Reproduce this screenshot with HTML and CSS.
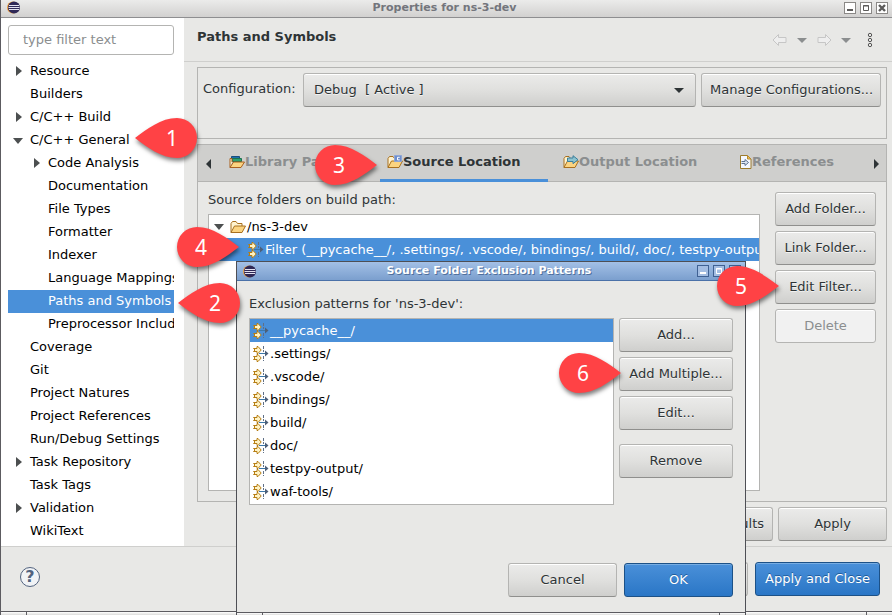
FILE: index.html
```html
<!DOCTYPE html>
<html lang="en">
<head>
    <meta charset="UTF-8">
    <meta name="viewport" content="width=device-width, initial-scale=1.0">
    <title>Properties for ns-3-dev</title>
    <link rel="stylesheet" href="styles.css">
</head>
<body>
    <!-- shared icons -->
    <svg class="defs" width="0" height="0" aria-hidden="true">
        <symbol id="eclipse" viewBox="0 0 13 13">
            <circle cx="6" cy="6.500" r="6" fill="#e8993c"/>
            <circle cx="7" cy="6.500" r="6" fill="#2f2856"/>
            <path d="M2 4.500h10M1.500 6.500h11M2 8.500h10" stroke="#e4e2f0" stroke-width="1.100"/>
        </symbol>
        <symbol id="filter" viewBox="0 0 16 16">
            <path d="M.500 2.500H4V.500h1L8.200 4 5 7.500H4v-2H.500L2 4z" class="gold"/>
            <path d="M.500 10.500H4v-2h1L8.200 12 5 15.500H4v-2H.500L2 12z" class="gold"/>
            <path d="M10.500 0v6M10.500 10v5" class="bar" stroke="#5f6f86" stroke-dasharray="3 1"/>
            <path d="M6 7.500h7" class="line" stroke="#3d78a8"/>
            <path d="M12 4.500l3.500 3-3.500 3z" class="head" fill="#4d5f78"/>
        </symbol>
        <symbol id="folder" viewBox="0 0 16 14">
            <path d="M1 12.500V3.500l1.500-2H6l1.500 2H12V6" fill="#fff3cf" stroke="#a8701f"/>
            <path d="M1 12.500L4.500 6h11L12 12.500z" fill="#fbd481" stroke="#a8701f" stroke-linejoin="round"/>
        </symbol>
        <symbol id="library" viewBox="0 0 16 14">
            <path d="M2.500 1.500h8v2h-8z" fill="#1e6fae" stroke="#184f7f"/>
            <path d="M3.500 3.500h9v3h-9z" fill="#2fa06f" stroke="#1c7350"/>
            <path d="M1 12.500V3.500h2V7" fill="#fff3cf" stroke="#a8601f"/>
            <path d="M1 12.500L4.500 7h11L12 12.500z" fill="#fbd481" stroke="#a8601f" stroke-linejoin="round"/>
        </symbol>
        <symbol id="source" viewBox="0 0 16 14">
            <use href="#folder" width="16" height="14"/>
            <path d="M7.500.500h7v6h-7z" fill="#6f8fce" stroke="#8ea6d6"/>
            <path d="M12.700 2.300h-2.200v2.600h2.200" fill="none" stroke="#fff"/>
        </symbol>
        <symbol id="output" viewBox="0 0 16 14">
            <use href="#folder" width="16" height="14"/>
            <path d="M4.500 3H10V.700l5 4-5 4V6.500H4.500z" fill="#8cc3cf" stroke="#3a7f9c"/>
        </symbol>
        <symbol id="references" viewBox="0 0 12 14">
            <path d="M.500.500h7l3.500 3.500v9.500H.500z" fill="#f4f8ff" stroke="#9c7b2c"/>
            <path d="M7.500.500V4H11z" fill="#f0c65a" stroke="#b98a2a"/>
            <path d="M1.500 6.500H5V4.500L8.500 7.500 5 10.500v-2H1.500" fill="#dfe8f3" stroke="#5e7391"/>
        </symbol>
        <symbol id="back" viewBox="0 0 16 14">
            <path d="M1 7l5.500-5.500V4.500H14v5H6.500v3z" fill="#eee" stroke="#c6c6c6"/>
        </symbol>
        <symbol id="pin-left" viewBox="0 0 62 40">
            <path d="M0 20C12 11 26 0 42 0a20 20 0 0 1 0 40C26 40 12 29 0 20z" fill="#ff4245"/>
        </symbol>
        <symbol id="pin-right" viewBox="0 0 62 40">
            <path d="M62 20C50 11 36 0 20 0a20 20 0 0 0 0 40C36 40 50 29 62 20z" fill="#ff4245"/>
        </symbol>
        <symbol id="minimize" viewBox="0 0 12 12"><path d="M3 8h6" stroke="currentColor" stroke-width="2"/></symbol>
        <symbol id="maximize" viewBox="0 0 12 12"><path d="M3.500 3.500h5v5h-5zM3 4h6" fill="none" stroke="currentColor"/></symbol>
        <symbol id="close" viewBox="0 0 12 12"><path d="M3 3l6 6M9 3L3 9" stroke="currentColor" stroke-width="2.400"/></symbol>
    </svg>

    <div class="window">
        <header class="titlebar">
            <svg class="app-icon"><use href="#eclipse"/></svg>
            <h1>Properties for ns-3-dev</h1>
            <div class="controls">
                <button aria-label="Minimize"><svg><use href="#minimize"/></svg></button>
                <button aria-label="Maximize"><svg><use href="#maximize"/></svg></button>
                <button aria-label="Close"><svg><use href="#close"/></svg></button>
            </div>
        </header>

        <div class="main">
            <nav class="sidebar">
                <input type="text" class="search" placeholder="type filter text" aria-label="Filter">
                <ul class="tree">
                    <li class="closed">Resource</li>
                    <li>Builders</li>
                    <li class="closed">C/C++ Build</li>
                    <li class="open">C/C++ General</li>
                    <li class="child closed">Code Analysis</li>
                    <li class="child">Documentation</li>
                    <li class="child">File Types</li>
                    <li class="child">Formatter</li>
                    <li class="child">Indexer</li>
                    <li class="child">Language Mappings</li>
                    <li class="child selected">Paths and Symbols</li>
                    <li class="child">Preprocessor Include</li>
                    <li>Coverage</li>
                    <li>Git</li>
                    <li>Project Natures</li>
                    <li>Project References</li>
                    <li>Run/Debug Settings</li>
                    <li class="closed">Task Repository</li>
                    <li>Task Tags</li>
                    <li class="closed">Validation</li>
                    <li>WikiText</li>
                </ul>
            </nav>

            <section class="page">
                <div class="page-header">
                    <h2>Paths and Symbols</h2>
                    <div class="history">
                        <button aria-label="Back"><svg width="16" height="14"><use href="#back"/></svg></button>
                        <button aria-label="Back history"><span class="caret"></span></button>
                        <button aria-label="Forward"><svg class="forward" width="16" height="14"><use href="#back"/></svg></button>
                        <button aria-label="Forward history"><span class="caret"></span></button>
                        <button class="menu" aria-label="Menu"><svg width="6" height="16" fill="none" stroke="#555"><circle cx="3" cy="3" r="1.700"/><circle cx="3" cy="8" r="1.700"/><circle cx="3" cy="13" r="1.700"/></svg></button>
                    </div>
                </div>

                <div class="page-body">
                    <div class="config">
                        <label for="config">Configuration:</label>
                        <div class="select-wrap">
                            <select id="config" class="btn">
                                <option>Debug&nbsp; [ Active ]</option>
                            </select>
                            <span class="caret dark"></span>
                        </div>
                        <button class="btn manage">Manage Configurations...</button>
                    </div>

                    <div class="panel">
                        <div class="tabs">
                            <button class="scroll prev" aria-label="Previous tabs"></button>
                            <button class="tab"><svg width="16" height="14"><use href="#library"/></svg>Library Paths</button>
                            <button class="tab active"><svg width="16" height="14"><use href="#source"/></svg>Source Location</button>
                            <button class="tab"><svg width="16" height="14"><use href="#output"/></svg>Output Location</button>
                            <button class="tab"><svg width="12" height="14"><use href="#references"/></svg>References</button>
                            <button class="scroll next" aria-label="Next tabs"></button>
                        </div>
                        <div class="panel-body">
                            <div class="sources">
                                <div class="caption">Source folders on build path:</div>
                                <ul class="list">
                                    <li class="root"><svg width="16" height="14"><use href="#folder"/></svg>/ns-3-dev</li>
                                    <li class="entry selected"><svg width="16" height="16"><use href="#filter"/></svg>Filter (__pycache__/, .settings/, .vscode/, bindings/, build/, doc/, testpy-output/, waf-tools/)</li>
                                </ul>
                            </div>
                            <div class="actions">
                                <button class="btn">Add Folder...</button>
                                <button class="btn">Link Folder...</button>
                                <button class="btn">Edit Filter...</button>
                                <button class="btn" disabled>Delete</button>
                            </div>
                        </div>
                    </div>

                    <div class="apply-row">
                        <button class="btn">Restore Defaults</button>
                        <button class="btn">Apply</button>
                    </div>
                </div>
            </section>
        </div>

        <footer class="footer">
            <button class="help" aria-label="Help">?</button>
            <div class="footer-buttons">
                <button class="btn">Cancel</button>
                <button class="btn primary">Apply and Close</button>
            </div>
        </footer>
        <div class="grip"></div>
    </div>

    <div class="dialog" role="dialog" aria-labelledby="dialog-title">
        <header class="titlebar">
            <svg class="app-icon"><use href="#eclipse"/></svg>
            <h1 id="dialog-title">Source Folder Exclusion Patterns</h1>
            <div class="controls">
                <button aria-label="Minimize"><svg><use href="#minimize"/></svg></button>
                <button aria-label="Maximize"><svg><use href="#maximize"/></svg></button>
                <button aria-label="Close"><svg><use href="#close"/></svg></button>
            </div>
        </header>
        <div class="dialog-body">
            <div class="caption">Exclusion patterns for 'ns-3-dev':</div>
            <div class="patterns">
                <ul class="list">
                    <li class="selected"><svg width="16" height="16"><use href="#filter"/></svg>__pycache__/</li>
                    <li><svg width="16" height="16"><use href="#filter"/></svg>.settings/</li>
                    <li><svg width="16" height="16"><use href="#filter"/></svg>.vscode/</li>
                    <li><svg width="16" height="16"><use href="#filter"/></svg>bindings/</li>
                    <li><svg width="16" height="16"><use href="#filter"/></svg>build/</li>
                    <li><svg width="16" height="16"><use href="#filter"/></svg>doc/</li>
                    <li><svg width="16" height="16"><use href="#filter"/></svg>testpy-output/</li>
                    <li><svg width="16" height="16"><use href="#filter"/></svg>waf-tools/</li>
                </ul>
                <div class="actions">
                    <button class="btn">Add...</button>
                    <button class="btn">Add Multiple...</button>
                    <button class="btn">Edit...</button>
                    <button class="btn remove">Remove</button>
                </div>
            </div>
            <div class="dialog-buttons">
                <button class="btn">Cancel</button>
                <button class="btn primary">OK</button>
            </div>
        </div>
        <div class="grip"></div>
    </div>

    <!-- numbered steps -->
    <div class="pin left pin-1"><svg><use href="#pin-left"/></svg><span>1</span></div>
    <div class="pin left pin-2"><svg><use href="#pin-left"/></svg><span>2</span></div>
    <div class="pin right pin-3"><svg><use href="#pin-right"/></svg><span>3</span></div>
    <div class="pin right pin-4"><svg><use href="#pin-right"/></svg><span>4</span></div>
    <div class="pin right pin-5"><svg><use href="#pin-right"/></svg><span>5</span></div>
    <div class="pin right pin-6"><svg><use href="#pin-right"/></svg><span>6</span></div>
</body>
</html>
```
FILE: styles.css
```css
* {
    box-sizing: border-box;
}
body {
    margin: 0;
    position: relative;
    background-color: #e8e8e6;
    color: #2e3436;
    font-family: "DejaVu Sans", sans-serif;
    font-size: 13px;
    line-height: 16px;
}
h1, h2, ul {
    margin: 0;
    padding: 0;
}
ul {
    list-style: none;
}
button {
    font: inherit;
    color: inherit;
    margin: 0;
    padding: 0;
    border: 0;
    background: none;
}
svg {
    flex: none;
}
.defs {
    position: absolute;
}
.gold {
    fill: #fff3c4;
    stroke: #b57c12;
}
.selected {
    --arrow: #3f5570;
}

/* window frame */
.window {
    display: flex;
    flex-direction: column;
    min-height: 100vh;
    border-left: 1px solid #5c5b60;
}
.titlebar {
    display: flex;
    align-items: center;
    flex: none;
    height: 18px;
    padding: 0 4px 2px 6px;
    border-bottom: 1px solid #8e8e90;
    background: linear-gradient(#ebebea, #d2d1d0);
    color: #73757c;
}
.titlebar h1 {
    flex: 1;
    padding-left: 25px;
    font-size: 11px;
    line-height: 14px;
    text-align: center;
}
.app-icon {
    width: 13px;
    height: 13px;
}
.controls {
    display: flex;
    gap: 4px;
}
.controls button {
    width: 12px;
    height: 12px;
    background-color: #fff;
    outline: 1px solid #8a8886;
    outline-offset: -1px;
    color: #5c5b5a;
}
.controls svg {
    display: block;
    width: 12px;
    height: 12px;
}
.grip {
    flex: none;
    height: 4px;
    border-top: 1px solid #5c5b60;
    background:
        linear-gradient(#5c5b60, #5c5b60) 25px 0 / 1px 100% no-repeat,
        linear-gradient(#5c5b60, #5c5b60) right 25px top 0 / 1px 100% no-repeat,
        linear-gradient(#fff, #dcdcda);
}
.main {
    display: flex;
    flex: 1;
}

/* category tree */
.sidebar {
    flex: none;
    width: 183px;
    padding: 7px 10px 0 7px;
    background-color: #fff;
}
.search {
    display: block;
    width: 100%;
    height: 30px;
    margin-bottom: 5px;
    padding: 0 14px 2px;
    border: 1px solid #b4b4b2;
    border-radius: 3px;
    font: inherit;
}
.search::placeholder {
    color: #8b8e8f;
}
.tree {
    overflow: hidden;
}
.tree li {
    position: relative;
    height: 23px;
    padding-left: 22px;
    line-height: 22px;
    color: #000;
    white-space: nowrap;
}
.tree .child {
    padding-left: 40px;
}
.tree .selected, .list .selected {
    background-color: #4a90d9;
    color: #fff;
}
.closed::before, .open::before, .root::before {
    content: "";
    position: absolute;
    left: 8px;
    top: 6px;
    border: 5px solid transparent;
    border-left: 6px solid #4c4f50;
    border-right: 0;
}
.child.closed::before {
    left: 26px;
}
.open::before, .root::before {
    left: 5px;
    top: 9px;
    border: 5px solid transparent;
    border-top: 6px solid #4c4f50;
    border-bottom: 0;
}

/* properties page */
.page {
    display: flex;
    flex-direction: column;
    flex: 1;
    min-width: 0;
}
.page-header {
    display: flex;
    justify-content: space-between;
    height: 44px;
    padding: 10px 19px 0 13px;
    border-bottom: 1px solid #cfcfcd;
}
.page-header h2 {
    font-size: 13px;
    line-height: 18px;
}
.history {
    display: flex;
    align-items: center;
    height: 24px;
    gap: 9px;
}
.history button, .history svg {
    display: block;
}
.history .menu {
    margin-left: 7px;
}
.forward {
    transform: scaleX(-1);
}
.caret {
    display: block;
    border: 5px solid transparent;
    border-top-color: #8b8e8f;
    border-bottom: 0;
}
.caret.dark {
    border-top-color: #2e3436;
}
.page-body {
    display: flex;
    flex-direction: column;
    flex: 1;
    gap: 5px;
    padding: 5px 5px 5px 13px;
}
.btn {
    height: 34px;
    padding: 0 8px 1px;
    border: 1px solid #b4b4b2;
    border-bottom-color: #8f8f8d;
    border-radius: 3px;
    background: linear-gradient(#ebebea, #e0e0de 50%, #cfcfcd);
    box-shadow: inset 0 1px #fff;
    color: #2e3436;
    font: inherit;
    text-shadow: 0 1px #f2f2f1;
    white-space: nowrap;
}
.btn:disabled {
    border-color: #b4b4b2;
    background: #f1f1f1;
    color: #8b8e8f;
}
.btn.primary {
    border-color: #1c5187;
    background: linear-gradient(#4a90d9, #2a76c6);
    box-shadow: inset 0 1px #77ade3;
    color: #fff;
    text-shadow: 0 -1px #1f5c9b;
}
.config {
    display: flex;
    align-items: flex-start;
    gap: 5px;
    height: 72px;
    padding: 5px;
    border: 1px solid #b4b4b2;
}
.config label {
    width: 95px;
    line-height: 32px;
}
.select-wrap {
    position: relative;
    flex: 1;
}
.select-wrap select {
    width: 100%;
    padding: 0 10px 1px;
    appearance: none;
}
.select-wrap .caret {
    position: absolute;
    right: 12px;
    top: 15px;
}
.manage {
    width: 180px;
}

/* tabs */
.panel {
    display: flex;
    flex-direction: column;
    flex: 1;
    border: 1px solid #b4b4b2;
}
.tabs {
    display: grid;
    grid-template-columns: 12px 150px 168px 169px 1fr 12px;
    column-gap: 8px;
    height: 37px;
    padding: 0 4px;
    border-bottom: 1px solid #b4b4b2;
    background-color: #cfcfcd;
}
.tab {
    display: flex;
    align-items: center;
    height: 37px;
    padding: 0 0 0 7px;
    border-bottom: 3px solid transparent;
    color: #8b8e8f;
    font-weight: bold;
    white-space: nowrap;
}
.tab.active {
    border-bottom-color: #4a90d9;
    color: #2e3436;
}
.scroll {
    justify-self: center;
    align-self: center;
    border: 5px solid transparent;
}
.scroll.prev {
    border-right-color: #2e3436;
    border-left: 0;
}
.scroll.next {
    border-left-color: #2e3436;
    border-right: 0;
}
.panel-body {
    display: flex;
    flex: 1;
    gap: 15px;
    padding: 10px;
}
.sources {
    display: flex;
    flex-direction: column;
    flex: 1;
    min-width: 0;
}
.caption {
    margin-bottom: 6px;
}
.list {
    flex: 1;
    overflow: hidden;
    padding-bottom: 1px;
    border: 1px solid #b4b4b2;
    background-color: #fff;
}
.list li {
    display: flex;
    position: relative;
    align-items: center;
    gap: 1px;
    height: 23px;
    padding-left: 3px;
    color: #000;
    line-height: 22px;
    white-space: nowrap;
}
.list .root {
    padding-left: 21px;
}
.list .entry {
    padding-left: 39px;
}
.actions {
    display: flex;
    flex-direction: column;
    gap: 5px;
    width: 101px;
}
.apply-row {
    display: flex;
    justify-content: flex-end;
    gap: 5px;
}
.apply-row .btn {
    min-width: 109px;
}

/* footer */
.footer {
    display: flex;
    justify-content: space-between;
    height: 65px;
    padding: 15px 12px 0 19px;
    border-top: 1px solid #cfcfcd;
}
.help {
    width: 20px;
    height: 20px;
    margin-top: 5px;
    border: 1px solid #52637f;
    border-radius: 50%;
    background-color: #f1f3f6;
    color: #52637f;
    font-size: 16px;
    font-weight: bold;
    line-height: 18px;
}
.footer-buttons {
    display: flex;
    gap: 7px;
}
.footer-buttons .btn {
    width: 125px;
}

/* exclusion patterns dialog */
.dialog {
    position: absolute;
    top: 261px;
    bottom: 0;
    left: 236px;
    display: flex;
    flex-direction: column;
    width: 510px;
    border: 1px solid #4e4f55;
    border-bottom: 0;
    background-color: #e8e8e6;
}
.dialog .titlebar {
    height: 19px;
    padding-bottom: 0;
    border-bottom-color: #4a71a8;
    background: linear-gradient(#a3c0e6, #7b9fce);
    color: #fff;
    text-shadow: 1px 1px #4f6f9c;
}
.dialog .controls button {
    background-color: #a3bde2;
    outline-color: #3f6193;
    color: #fff;
}
.dialog .grip {
    height: 3px;
}
.dialog-body {
    display: flex;
    flex-direction: column;
    flex: 1;
    padding: 15px 12px;
}
.patterns {
    display: flex;
    gap: 5px;
}
.patterns .actions {
    width: 114px;
}
.patterns .remove {
    margin-top: 9px;
}
.dialog-buttons {
    display: flex;
    justify-content: flex-end;
    gap: 7px;
    margin-top: auto;
}
.dialog-buttons .btn {
    width: 109px;
}

/* step pins */
.pin {
    position: absolute;
    width: 62px;
    height: 40px;
    color: #fff;
    font-family: "Noto Sans", sans-serif;
    font-size: 21px;
    line-height: 40px;
    text-align: center;
}
.pin svg {
    position: absolute;
    top: 0;
    left: 0;
    width: 62px;
    height: 40px;
    overflow: visible;
    filter: drop-shadow(1px 3px 2px rgba(0, 0, 0, 0.5));
}
.pin span {
    position: relative;
}
.pin.left {
    padding-left: 12px;
}
.pin.right {
    padding-right: 14px;
}
.pin-1 {
    top: 118px;
    left: 135px;
}
.pin-2 {
    top: 283px;
    left: 178px;
}
.pin-3 {
    top: 145px;
    left: 315px;
}
.pin-4 {
    top: 227px;
    left: 177px;
}
.pin-5 {
    top: 266px;
    left: 717px;
}
.pin-6 {
    top: 353px;
    left: 559px;
}
```
